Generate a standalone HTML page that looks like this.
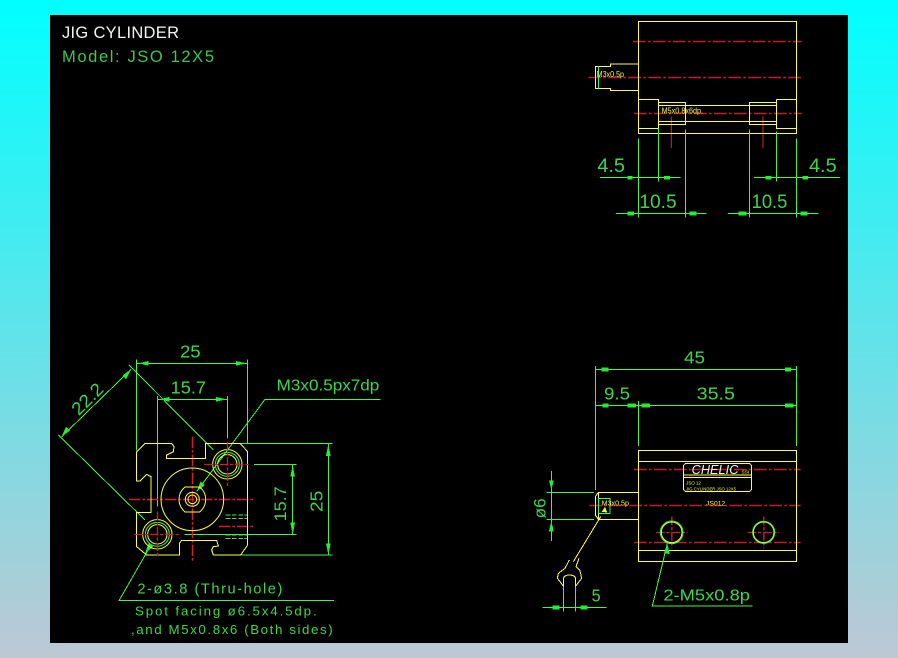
<!DOCTYPE html>
<html>
<head>
<meta charset="utf-8">
<title>JIG CYLINDER</title>
<style>
html,body{margin:0;padding:0;width:898px;height:658px;overflow:hidden;background:linear-gradient(180deg,#00ffff 0%,#bec8d4 100%);}
svg{position:absolute;left:0;top:0;display:block;}
text{font-family:"Liberation Sans",sans-serif;stroke:none;}
.g{fill:none;stroke:#40f840;stroke-width:3;}
.y{fill:none;stroke:#ffff40;stroke-width:3;}
.r{fill:none;stroke:#c41c2c;stroke-width:4.5;stroke-dasharray:38 7 8 7;shape-rendering:auto;}
.r2{fill:none;stroke:#d81c24;stroke-width:4.5;stroke-dasharray:34 6 8 6;shape-rendering:auto;}
.rs{fill:none;stroke:#d81c24;stroke-width:4;stroke-dasharray:26 5 10 5;shape-rendering:auto;}
.a{fill:#20f030;stroke:none;}
.t{fill:#3cd848;}
.ty{fill:#f8f840;}
</style>
</head>
<body>
<svg width="898" height="658" viewBox="0 0 898 658" xmlns="http://www.w3.org/2000/svg" shape-rendering="crispEdges">
<rect x="50" y="15" width="798" height="628" fill="#000"/>

<text x="62" y="38" font-size="16.5" fill="#f4f4f4" textLength="117" lengthAdjust="spacing">JIG  CYLINDER</text>
<text x="62" y="62" font-size="16.5" fill="#3cc848" textLength="152" lengthAdjust="spacing">Model:  JSO  12X5</text>

<!-- top-right view -->
<g transform="translate(570 10) scale(.33333)">
<path class="r" d="M189 94.5H695M55 202.5H695M192 310.5H695"/>
<path class="r" style="stroke-dasharray:none;stroke-width:3.5" d="M304 320V414M579 320V414"/>
<path class="y" d="M205 34H680V371H205ZM205 162H122L122 169H76V236H122L122 241H205M205 268H266V355H205M266 277H347V344H266ZM266 286H619M347 335H619M266 335H347M538 277H619V344H538ZM619 268H680M619 268V355H680"/>
<path class="g" d="M86 169V236M205 385V622M266 355V515M346 358V622M538 358V622M619 365V515M680 385V622M90 503H332M552 503H810M138 610H410M474 610H746"/>
<path class="a" d="M172 498H188V509H172ZM282 498H300V509H282ZM586 498H604V509H586ZM698 498H714V509H698ZM172 604H192V616H172ZM358 604H380V616H358ZM505 604H530V616H505ZM692 604H712V616H692Z"/>
<text class="t" x="82" y="486" font-size="58" textLength="83" lengthAdjust="spacingAndGlyphs">4.5</text>
<text class="t" x="717" y="486" font-size="58" textLength="83" lengthAdjust="spacingAndGlyphs">4.5</text>
<text class="t" x="208" y="594" font-size="58" textLength="112" lengthAdjust="spacingAndGlyphs">10.5</text>
<text class="t" x="545" y="594" font-size="58" textLength="107" lengthAdjust="spacingAndGlyphs">10.5</text>
<text class="ty" x="80" y="201" font-size="24" textLength="82" lengthAdjust="spacingAndGlyphs">M3x0.5p</text>
<text class="ty" x="275" y="310" font-size="24" textLength="124" lengthAdjust="spacingAndGlyphs">M5x0.8x6dp.</text>
</g>

<!-- front view bottom-left -->
<g transform="translate(50 340) scale(.33333)">
<path class="g" d="M259 58V332M593 58V310M322 168V500M533 168V295M259 70H593M322 178H533M237 75L490 330M25 285L285 540M35 290L243 88M992 178H645L440 455M570 310H848M575 645H848M835 310V645M612 373H740M403 583H740M728 373V583M852 782H207L300 620"/>
<path class="a" d="M265 70L295 63V77ZM590 70L558 63V77ZM328 178L358 171V185ZM530 178L498 171V185ZM835 312L828 348H842ZM835 645L828 610H842ZM728 375L721 410H735ZM728 583L721 548H735ZM243 88L218 106L228 118ZM35 290L60 272L48 260ZM440 455L465 435L452 424ZM285 640L310 620L296 610Z"/>
<path class="r2" d="M427.5 290V668M237 478.5H615M507 559.5H615"/>
<path class="y" d="M572 645H490L485 630L490 620L505 618L500 601H395L388 610V645H290L260 620V518H303V410L290 403L270 423H260V335L285 310H365L372 320L370 335L350 345V355H467V310H570L593 335V615Z"/>
<g shape-rendering="auto">
<circle class="y" cx="427" cy="478" r="94"/>
<path class="y" d="M405 441H449Q467 455 467 478T449 516H405Q387 500 387 478T405 441Z"/>
<circle class="y" cx="427" cy="478" r="21"/>
<circle class="y" cx="427" cy="478" r="13"/>
<circle class="y" cx="532" cy="373" r="44"/>
<circle class="g" cx="532" cy="373" r="36"/>
<circle class="y" cx="532" cy="373" r="29"/>
<circle class="y" cx="322" cy="583" r="44"/>
<circle class="g" cx="322" cy="583" r="36"/>
<circle class="y" cx="322" cy="583" r="29"/>
</g>
<path class="rs" d="M463 373.5H600M532.5 305V443M253 583.5H390M322.5 515V652"/>
<path d="M527 525H593M527 535H593M527 585H593M527 595H593" fill="none" stroke="#58e038" stroke-width="3" stroke-dasharray="14 5"/>
<text class="t" x="390" y="53" font-size="54" textLength="62" lengthAdjust="spacingAndGlyphs">25</text>
<text class="t" x="362" y="160" font-size="54" textLength="106" lengthAdjust="spacingAndGlyphs">15.7</text>
<text class="t" x="680" y="151" font-size="47" textLength="308" lengthAdjust="spacingAndGlyphs">M3x0.5px7dp</text>
<text class="t" transform="translate(125 190) rotate(-45)" x="-55" y="0" font-size="54" textLength="110" lengthAdjust="spacingAndGlyphs">22.2</text>
<text class="t" transform="translate(708 492) rotate(-90)" x="-52" y="0" font-size="50" textLength="105" lengthAdjust="spacingAndGlyphs">15.7</text>
<text class="t" transform="translate(818 484) rotate(-90)" x="-32" y="0" font-size="54" textLength="64" lengthAdjust="spacingAndGlyphs">25</text>
<text class="t" x="262" y="760" font-size="44" textLength="435" lengthAdjust="spacing">2-ø3.8 (Thru-hole)</text>
<text class="t" x="255" y="827" font-size="40" textLength="545" lengthAdjust="spacing">Spot facing  ø6.5x4.5dp.</text>
<text class="t" x="243" y="882" font-size="40" textLength="605" lengthAdjust="spacing">,and M5x0.8x6 (Both sides)</text>
</g>

<!-- side view bottom-right -->
<g transform="translate(530 340) scale(.33333)">
<path class="r" d="M312 388.5H812M178 496.5H812M312 607.5H812"/>
<path class="y" d="M325 331H800V664H325ZM325 364H800M325 631H800M325 457H205L196 470V525L205 538H325M205 457V538"/>
<path class="y" d="M212 530L130 665M118 660L105 685L85 700L82 715L100 738V720Q100 705 118 705Q137 705 137 720V738L155 715L150 692L138 680L147 655"/>
<path class="y" d="M460 382Q460 370 472 370H653Q665 370 665 382V443Q665 455 653 455H472Q460 455 460 443ZM460 405H665M460 412H665"/>
<path class="g" d="M196 78V450M325 183V318M800 78V318M196 88H800M196 196H800M50 457H192M50 538H192M64 393V603M205 475H240V520H205ZM100 740V815M136 740V815M37 802H230M668 798H367L412 610"/>
<path class="a" d="M215 83H235V94H215ZM765 83H783V94H765ZM218 191H235V202H218ZM292 191H318V202H292ZM335 191H360V202H335ZM765 191H790V202H765ZM68 797H88V808H68ZM152 797H172V808H152ZM64 450L57 422H71ZM64 542L57 574H71ZM412 610L402 640L419 642Z"/>
<path fill="#f0f040" d="M215 515L225 500L232 518Z"/>
<path class="rs" d="M378 577.5H472M425.5 530V625M653 577.5H748M701.5 530V625"/>
<g shape-rendering="auto">
<circle class="y" cx="425" cy="577" r="31"/>
<circle class="g" cx="425" cy="577" r="34"/>
<circle class="y" cx="701" cy="577" r="31"/>
<circle class="g" cx="701" cy="577" r="33"/>
</g>
<text class="t" x="462" y="71" font-size="54" textLength="63" lengthAdjust="spacingAndGlyphs">45</text>
<text class="t" x="222" y="178" font-size="54" textLength="78" lengthAdjust="spacingAndGlyphs">9.5</text>
<text class="t" x="500" y="178" font-size="54" textLength="115" lengthAdjust="spacingAndGlyphs">35.5</text>
<text class="t" x="185" y="784" font-size="52" textLength="27" lengthAdjust="spacingAndGlyphs">5</text>
<text class="t" x="400" y="781" font-size="46" textLength="260" lengthAdjust="spacingAndGlyphs">2-M5x0.8p</text>
<text class="t" transform="translate(46 505) rotate(-90)" x="-30" y="0" font-size="50" textLength="60" lengthAdjust="spacingAndGlyphs">ø6</text>
<text x="485" y="402" font-size="38" font-style="italic" fill="#f4f4f4" textLength="140" lengthAdjust="spacing">CHELIC</text>
<text class="ty" x="634" y="401" font-size="14" textLength="24" lengthAdjust="spacingAndGlyphs">SSI</text>
<text class="ty" x="468" y="433" font-size="14" textLength="45" lengthAdjust="spacing">JSO 12</text>
<text class="ty" x="468" y="451" font-size="15" textLength="150" lengthAdjust="spacingAndGlyphs">JIG CYLINDER JSO 12X5</text>
<text class="ty" x="528" y="497" font-size="20" textLength="58" lengthAdjust="spacingAndGlyphs">JS012</text>
<text class="ty" x="215" y="496" font-size="22" textLength="82" lengthAdjust="spacingAndGlyphs">M3x0.5p</text>
</g>
</svg>
</body>
</html>
